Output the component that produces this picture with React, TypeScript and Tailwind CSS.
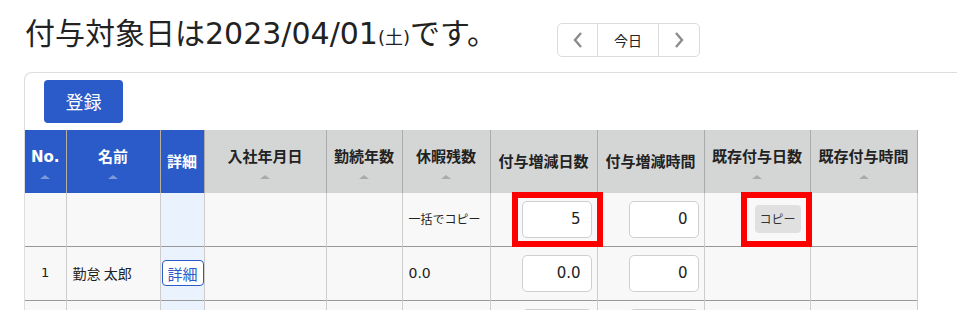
import React from "react"

const font = { fontFamily: '"DejaVu Sans", "Noto Sans CJK JP", sans-serif' }
const cjk = { fontFamily: '"Noto Sans CJK JP", "Noto Sans", sans-serif' }

type Col = { label: string; w: string; blue?: boolean; sort?: boolean }

const cols: Col[] = [
  { label: "No.", w: "w-[41px]", blue: true, sort: true },
  { label: "名前", w: "w-[94px]", blue: true, sort: true },
  { label: "詳細", w: "w-[44px]", blue: true },
  { label: "入社年月日", w: "w-[122px]", sort: true },
  { label: "勤続年数", w: "w-[76px]", sort: true },
  { label: "休暇残数", w: "w-[88px]", sort: true },
  { label: "付与増減日数", w: "w-[107px]" },
  { label: "付与増減時間", w: "w-[107px]" },
  { label: "既存付与日数", w: "w-[106px]", sort: true },
  { label: "既存付与時間", w: "w-[107px]", sort: true },
]

function NumInput({ value }: { value: string }) {
  return (
    <div className="ml-auto mr-[5px] flex h-[37px] w-[70px] items-center justify-end rounded-[5px] border border-[#cfcfcf] bg-white pr-[10px] text-[15px] text-[#222]">
      {value}
    </div>
  )
}

export default function App() {
  return (
    <div className="h-[310px] w-[957px] overflow-hidden bg-white text-[#222]" style={font}>
      <div className="flex h-[57px] items-start pl-[25px] pt-[14px]">
        <h1 className="w-[532px] shrink-0 whitespace-nowrap text-[30px] leading-[40px] font-normal text-[#222]">
          付与対象日は2023/04/01<span className="text-[18px]">(土)</span>です。
        </h1>
        <div className="mt-[9px] flex h-[34px] shrink-0 overflow-hidden rounded-[5px] border border-[#dcdcdc] bg-white">
          <button className="flex w-[40px] items-center justify-center border-r border-[#dcdcdc] text-[#8c8c8c]">
            <svg width="12" height="18" viewBox="0 0 12 18" fill="none" stroke="currentColor" strokeWidth="2.4">
              <path d="M9 2 L3 9 L9 16" />
            </svg>
          </button>
          <button className="flex w-[61px] items-center justify-center border-r border-[#dcdcdc] text-[14px] text-[#222]" style={cjk}>
            今日
          </button>
          <button className="flex w-[40px] items-center justify-center text-[#8c8c8c]">
            <svg width="12" height="18" viewBox="0 0 12 18" fill="none" stroke="currentColor" strokeWidth="2.4">
              <path d="M3 2 L9 9 L3 16" />
            </svg>
          </button>
        </div>
      </div>

      <div className="ml-[24px] mt-[15px] rounded-tl-[8px] border-l border-t border-[#dddddd]">
        <div className="pl-[19px] pt-[7px]">
          <button className="h-[43px] w-[79px] rounded-[4px] bg-[#2a5bc8] text-[18px] text-white" style={cjk}>
            登録
          </button>
        </div>
        <div className="relative mt-[7px]">
          <table className="table-fixed border-collapse text-[13px]">
            <thead>
              <tr className="h-[63px]">
                {cols.map((c, i) => (
                  <th
                    key={c.label}
                    className={`${c.w} p-0 align-top ${i > 0 ? "border-l" : ""} ${i === cols.length - 1 ? "border-r" : ""} ${
                      c.blue ? "border-[#b7b09c] bg-[#2a5bc8] text-white" : "border-[#aaaaaa] bg-[#d4d6d6] text-[#222]"
                    }`}
                  >
                    <div className={`flex flex-col items-center ${c.sort ? "pt-[16px]" : "pt-[21px]"}`}>
                      <span className="whitespace-nowrap text-[15px] leading-[22px] font-bold">{c.label}</span>
                      {c.sort && (
                        <span
                          className={`mt-[7px] h-0 w-0 border-x-[5px] border-b-[4px] border-x-transparent ${
                            c.blue ? "border-b-[#7d9ad8]" : "border-b-[#a9abab]"
                          }`}
                        />
                      )}
                    </div>
                  </th>
                ))}
              </tr>
            </thead>
            <tbody>
              <tr className="h-[53px] border-b border-[#999999] bg-[#f8f8f8]">
                <td className="border-r border-[#cccccc]"></td>
                <td className="border-r border-[#cccccc]"></td>
                <td className="border-r border-[#cccccc] bg-[#eaf2fe]"></td>
                <td className="border-r border-[#cccccc]"></td>
                <td className="border-r border-[#cccccc]"></td>
                <td className="border-r border-[#cccccc] pl-[6px] text-[12px] whitespace-nowrap" style={cjk}>
                  一括でコピー
                </td>
                <td className="border-r border-[#cccccc]">
                  <NumInput value="5" />
                </td>
                <td className="border-r border-[#cccccc]">
                  <NumInput value="0" />
                </td>
                <td className="border-r border-[#cccccc] pl-[50px]">
                  <button className="h-[28px] w-[46px] rounded-[4px] bg-[#e0e0e0] text-[12px] text-[#333]" style={cjk}>
                    コピー
                  </button>
                </td>
                <td className="border-r border-[#cccccc]"></td>
              </tr>
              <tr className="h-[54px] border-b border-[#999999] bg-[#f8f8f8]">
                <td className="border-r border-[#cccccc] text-center text-[13px]">1</td>
                <td className="border-r border-[#cccccc] pl-[6px] text-[14px] whitespace-nowrap" style={cjk}>
                  勤怠 太郎
                </td>
                <td className="border-r border-[#cccccc] bg-[#eaf2fe] pl-[1px]">
                  <button
                    className="h-[26px] w-[42px] rounded-[4px] border border-[#2a5bc8] bg-white text-[15px] leading-none text-[#2a5bc8]"
                    style={cjk}
                  >
                    詳細
                  </button>
                </td>
                <td className="border-r border-[#cccccc]"></td>
                <td className="border-r border-[#cccccc]"></td>
                <td className="border-r border-[#cccccc] pl-[6px] text-[14px]">0.0</td>
                <td className="border-r border-[#cccccc]">
                  <NumInput value="0.0" />
                </td>
                <td className="border-r border-[#cccccc]">
                  <NumInput value="0" />
                </td>
                <td className="border-r border-[#cccccc]"></td>
                <td className="border-r border-[#cccccc]"></td>
              </tr>
              <tr className="h-[54px] bg-[#f8f8f8]">
                <td className="border-r border-[#cccccc]"></td>
                <td className="border-r border-[#cccccc]"></td>
                <td className="border-r border-[#cccccc] bg-[#eaf2fe]"></td>
                <td className="border-r border-[#cccccc]"></td>
                <td className="border-r border-[#cccccc]"></td>
                <td className="border-r border-[#cccccc]"></td>
                <td className="border-r border-[#cccccc] align-top pt-[8px]">
                  <NumInput value="" />
                </td>
                <td className="border-r border-[#cccccc] align-top pt-[8px]">
                  <NumInput value="" />
                </td>
                <td className="border-r border-[#cccccc]"></td>
                <td className="border-r border-[#cccccc]"></td>
              </tr>
            </tbody>
          </table>
          <div className="pointer-events-none absolute left-[487px] top-[62px] h-[55px] w-[91px] border-[6px] border-[#ff0000]" />
          <div className="pointer-events-none absolute left-[716px] top-[62px] h-[55px] w-[71px] border-[6px] border-[#ff0000]" />
        </div>
      </div>
    </div>
  )
}
